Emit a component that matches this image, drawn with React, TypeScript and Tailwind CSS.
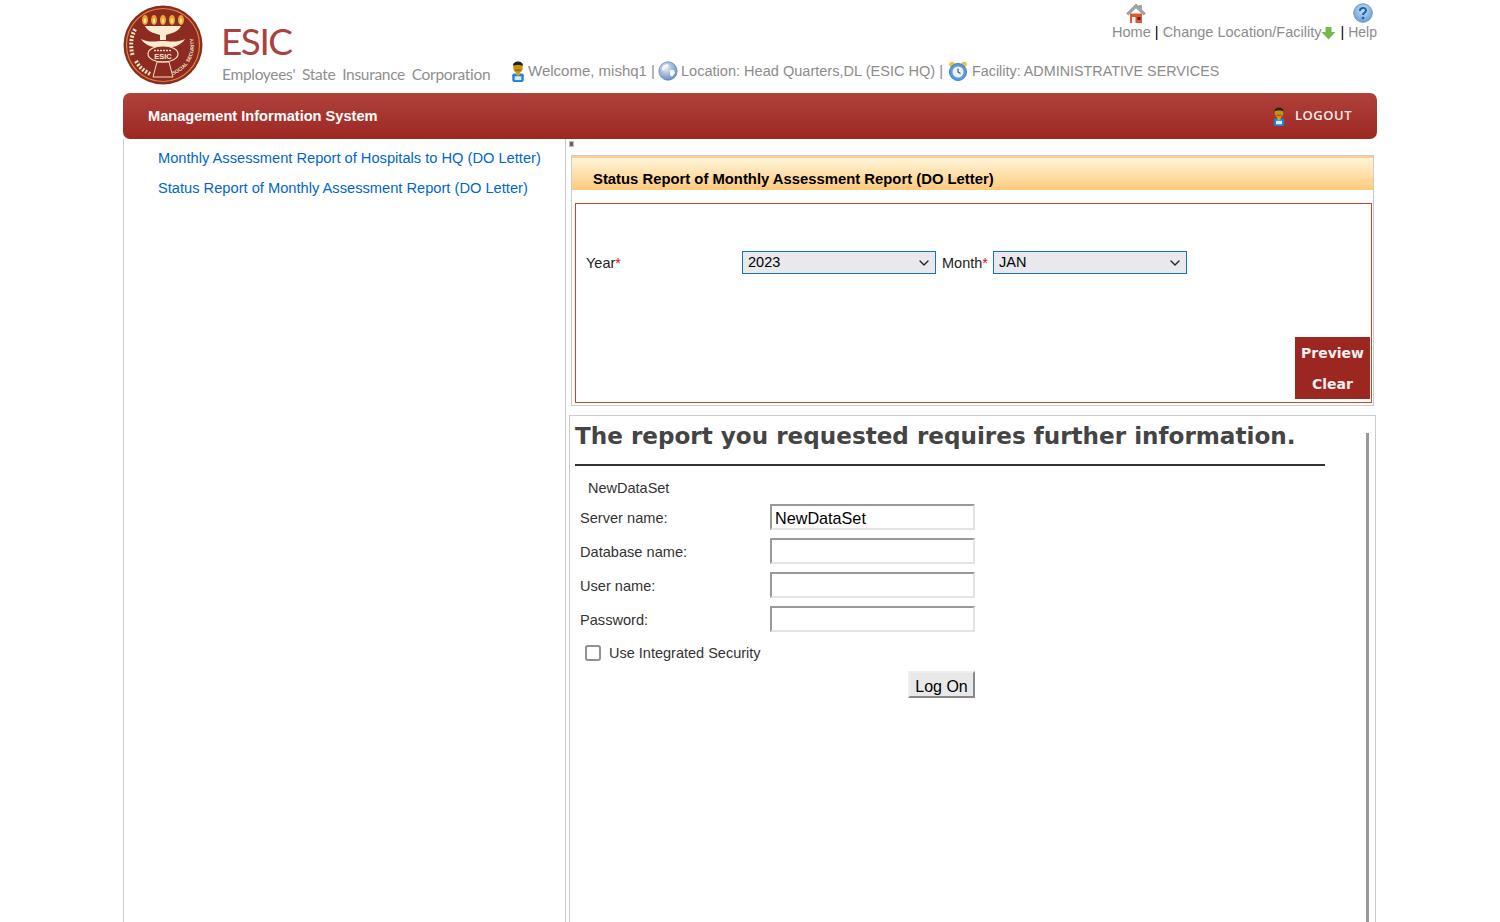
import { ChevronDown } from "lucide-react";

function PersonIcon({ className }: { className?: string }) {
  return (
    <svg viewBox="0 0 16 22" className={className}>
      <rect x="2" y="13" width="12" height="9" rx="2" fill="#1f7fe0" />
      <rect x="4.5" y="16" width="7" height="4" fill="#d8ecff" />
      <path d="M6 11h4v3l-2 2-2-2z" fill="#d8a020" />
      <ellipse cx="8" cy="7" rx="5" ry="5.5" fill="#c8920f" />
      <path d="M2.5 5C3 1.500 5.500 .5 8 .5s5 1 5.500 4.500C11 3.800 5 3.800 2.500 5z" fill="#2a2018" />
      <path d="M5 9.500h6" stroke="#7a5508" strokeWidth="1" />
    </svg>
  );
}

function GlobeIcon() {
  return (
    <svg viewBox="0 0 20 20" className="w-[20px] h-[20px] shrink-0">
      <defs>
        <radialGradient id="globe" cx="40%" cy="35%" r="70%">
          <stop offset="0%" stopColor="#e6eef8" />
          <stop offset="100%" stopColor="#5f88bd" />
        </radialGradient>
      </defs>
      <circle cx="10" cy="10" r="9.200" fill="url(#globe)" stroke="#6c8fb8" strokeWidth="0.800" />
      <path d="M6 4c2-1 4-1 5 0l-1 2-3 1-1 3-2-1c-.5-2 .5-4 2-5zM12 9l4 0 1 3-3 4-2-2z" fill="#f4f7fb" />
    </svg>
  );
}

function ClockIcon() {
  return (
    <svg viewBox="0 0 20 20" className="w-[20px] h-[20px] shrink-0">
      <circle cx="4" cy="3.500" r="2.800" fill="#f0c23a" />
      <circle cx="16" cy="3.500" r="2.800" fill="#f0c23a" />
      <circle cx="10" cy="11" r="8.500" fill="#5b9bdc" stroke="#3f7fbf" strokeWidth="1" />
      <circle cx="10" cy="11" r="5.500" fill="#eaf3fb" />
      <path d="M10 7.500V11l2.500 1.500" stroke="#555" strokeWidth="1.200" fill="none" />
    </svg>
  );
}

function HomeIcon() {
  return (
    <svg viewBox="0 0 20 19" className="w-[20px] h-[19px] ml-[10px]">
      <path d="M4 9.500h12V19H4z" fill="#d9583a" />
      <path d="M10 0 .5 9.500 2.500 11 10 3.800 17.500 11l2-1.500L15.500 5.500V1.500h-2.500v1.500z" fill="#a3a3a3" stroke="#7d7d7d" strokeWidth="0.500" />
      <rect x="6" y="13" width="3.500" height="6" fill="#f3efe8" />
      <rect x="11.500" y="13" width="3" height="3" fill="#6e1f10" />
    </svg>
  );
}

function HelpIcon() {
  return (
    <svg viewBox="0 0 20 20" className="w-[20px] h-[20px]">
      <defs>
        <radialGradient id="help" cx="50%" cy="35%" r="70%">
          <stop offset="0%" stopColor="#c4dcf4" />
          <stop offset="100%" stopColor="#5f9bd8" />
        </radialGradient>
      </defs>
      <circle cx="10" cy="10" r="9.300" fill="url(#help)" stroke="#7f96ad" strokeWidth="1" />
      <path d="M7 8c0-4 6-4 6-.5 0 2-3 2-3 4.500" stroke="#1f5f9f" strokeWidth="2" fill="none" />
      <circle cx="10" cy="15" r="1.300" fill="#1f5f9f" />
    </svg>
  );
}

function ArrowIcon() {
  return (
    <svg viewBox="0 0 15 14" className="w-[15px] h-[14px] shrink-0 mt-[1px]">
      <path d="M4.500 1h6v5h4l-7 7.500L.5 6h4z" fill="#78b84a" />
    </svg>
  );
}

function Logo() {
  return (
    <svg viewBox="0 0 80 80" className="w-[80px] h-[80px] shrink-0">
      <defs>
        <path id="rightArc" d="M50 70A32 32 0 0 0 70 32" />
      </defs>
      <circle cx="40" cy="40" r="39.500" fill="#8d2a22" />
      <circle cx="40" cy="40" r="36.500" fill="none" stroke="#d98a3a" strokeWidth="1.200" />
      {[22, 31, 40, 49, 58].map((x) => (
        <g key={x}>
          <ellipse cx={x} cy={15} rx="3" ry="5" fill="#f0a32a" />
          <ellipse cx={x} cy={16} rx="1.300" ry="2.400" fill="#fbe6a8" />
        </g>
      ))}
      <path d="M22 21H58C56 27 46 29 43 30V35H37V30C34 29 24 27 22 21z" fill="#f7ecd2" />
      <path d="M18 34C26 38 34 36 40 36C46 36 54 38 62 34C58 41 48 43 40 43C32 43 22 41 18 34z" fill="#f7ecd2" />
      <ellipse cx="40" cy="49" rx="15" ry="8" fill="#8d2a22" stroke="#f3e3c0" strokeWidth="1.200" />
      <path d="M31 45.500h18" stroke="#f3e3c0" strokeWidth="1.500" strokeDasharray="2 1" />
      <text x="40" y="53.500" textAnchor="middle" fontSize="7.500" fontWeight="700" fill="#f7ecd2" fontFamily="Liberation Sans">ESIC</text>
      <path d="M34 57h12l4 15H30z" fill="none" stroke="#f3e3c0" strokeWidth="1" />
      <text fontSize="5" fontWeight="700" fill="#f3e3c0" fontFamily="Liberation Sans">
        <textPath href="#rightArc">SOCIAL SECURITY</textPath>
      </text>
      <path d="M9.500 50C7 40 8 30 13 23M13 56c3 6 8 10 14 13" fill="none" stroke="#f3e3c0" strokeWidth="4" strokeDasharray="2 1.500" />
    </svg>
  );
}

function ParamRow({ label, value }: { label: string; value?: string }) {
  return (
    <div className="flex items-center h-[26px] mb-[8px]">
      <label className="w-[195px] pl-[5px] pt-[3px] text-[14.6px] text-[#333]">{label}</label>
      <input
        defaultValue={value}
        className="w-[205px] h-[26px] px-[3px] pt-[3px] text-[16.2px] text-black border-2 border-t-[#999] border-l-[#999] border-r-[#e4e4e4] border-b-[#e4e4e4] outline-none"
      />
    </div>
  );
}

function SelectBox({ value, options }: { value: string; options: string[] }) {
  return (
    <div className="relative w-[194px] h-[23px] shrink-0">
      <select
        defaultValue={value}
        className="appearance-none w-full h-full pl-[5px] text-[14.5px] text-black bg-[#e8e8ed] border border-[#0f75bc] outline-none"
      >
        {options.map((o) => (
          <option key={o}>{o}</option>
        ))}
      </select>
      <ChevronDown className="absolute right-[4px] top-[4px] w-[16px] h-[16px] text-[#222] pointer-events-none" strokeWidth={2} />
    </div>
  );
}

export default function App() {
  return (
    <div className="h-[922px] overflow-hidden bg-white font-['Liberation_Sans',Arial,sans-serif]">
      <div className="w-[1254px] ml-[123px]">
        {/* Header */}
        <header className="flex h-[93px]">
          <div className="pt-[5px]">
            <Logo />
          </div>
          <div className="w-[288px] ml-[19px] pt-[19px] shrink-0 font-['Lato',sans-serif]">
            <div className="text-[37px] leading-[44px] text-[#a8423f] tracking-[-1.5px] -ml-[1px]">ESIC</div>
            <div className="text-[15.5px] leading-[20px] mt-[1px] text-[#8f8f8f] whitespace-nowrap tracking-[-0.3px] [word-spacing:3px]">
              Employees' State Insurance Corporation
            </div>
          </div>
          <div className="flex-1 flex flex-col text-[#8c8c8c]">
            <div className="flex justify-end items-end h-[41px] pt-[3px] text-[14.5px]">
              <a className="flex flex-col items-center leading-[18px] text-[14.6px]">
                <HomeIcon />
                Home
              </a>
              <span className="text-black mx-[4px] leading-[18px]">|</span>
              <a className="flex items-center leading-[18px]">
                Change Location/Facility
                <ArrowIcon />
              </a>
              <span className="text-black mx-[4px] leading-[18px]">|</span>
              <a className="flex flex-col items-center leading-[18px] text-[14px]">
                <HelpIcon />
                Help
              </a>
            </div>
            <div className="flex items-center mt-[19px] h-[22px] whitespace-nowrap">
              <PersonIcon className="w-[16px] h-[21px] shrink-0 mr-[2px]" />
              <span className="w-[130px] shrink-0 text-[15px]">Welcome, mishq1 |</span>
              <GlobeIcon />
              <span className="ml-[3px] w-[267px] shrink-0 pt-[2px] text-[14.56px]">Location: Head Quarters,DL (ESIC HQ) |</span>
              <ClockIcon />
              <span className="ml-[4px] pt-[2px] text-[14.35px]">Facility: ADMINISTRATIVE SERVICES</span>
            </div>
          </div>
        </header>

        {/* Title bar */}
        <div className="flex items-center justify-between h-[46px] rounded-[7px] bg-gradient-to-b from-[#b0413b] to-[#9c2721] px-[25px]">
          <span className="pt-[2px] text-[14.6px] font-bold text-white">Management Information System</span>
          <a className="flex items-center gap-[9px] text-[13px] font-semibold font-['Open_Sans',sans-serif] text-[#eeeeee] tracking-[0.5px]">
            <PersonIcon className="w-[14px] h-[19px]" />
            <span className="pb-[1px]">LOGOUT</span>
          </a>
        </div>

        <div className="flex h-[783px]">
          {/* Left menu */}
          <nav className="w-[443px] shrink-0 border-l border-r border-[#cccccc] pt-[4px] pl-[34px] text-[14.67px] text-[#0066cc]">
            <a className="block h-[30px] leading-[30px]">Monthly Assessment Report of Hospitals to HQ (DO Letter)</a>
            <a className="block h-[30px] leading-[30px]">Status Report of Monthly Assessment Report (DO Letter)</a>
          </nav>

          <main className="flex-1 pl-[3px]">
            <div className="w-[5px] h-[6px] mt-[2px] bg-[#666] border border-[#bbb]" />

            {/* Filter panel */}
            <section className="ml-[2px] mt-[8px] w-[803px] h-[251px] border border-[#cccccc] flex flex-col">
              <h2 className="h-[34px] shrink-0 pl-[21px] pt-[12px] leading-[18px] border-t-2 border-[#ffcf8f] bg-gradient-to-b from-[#fff6d8] to-[#ffc97c] text-[14.83px] font-bold text-black">
                Status Report of Monthly Assessment Report (DO Letter)
              </h2>
              <div className="mt-[13px] ml-[3px] w-[797px] h-[200px] border border-[#c8491c] flex flex-col">
                <div className="flex items-center h-[23px] mt-[47px] text-[14.5px] text-[#222]">
                  <span className="w-[166px] shrink-0 pl-[10px] pt-[2px]">
                    Year<span className="text-red-600">*</span>
                  </span>
                  <SelectBox value="2023" options={["2023", "2022"]} />
                  <span className="ml-[6px] w-[51px] shrink-0 pt-[2px]">
                    Month<span className="text-red-600">*</span>
                  </span>
                  <SelectBox value="JAN" options={["JAN", "FEB"]} />
                </div>
                <div className="mt-auto mb-[3px] mr-[1px] self-end w-[75px] h-[62px] bg-[#9c2721] flex flex-col items-center text-[14px] font-bold font-['DejaVu_Sans',sans-serif] text-[#f5f0ee]">
                  <button className="h-[31px] w-full pt-[2px]">Preview</button>
                  <button className="h-[31px] w-full pt-[2px]">Clear</button>
                </div>
              </div>
            </section>

            {/* Report viewer */}
            <section className="relative mt-[9px] w-[807px] h-[520px] border border-[#cccccc] pl-[5px]">
              <div className="absolute right-[6px] top-[17px] bottom-0 w-[3px] bg-[#999999]" />
              <h1 className="w-[750px] h-[50px] border-b-2 border-[#333333] pt-[4px] text-[23.1px] leading-[32px] font-bold font-['DejaVu_Sans',sans-serif] text-[#444444] whitespace-nowrap">
                The report you requested requires further information.
              </h1>
              <div className="pl-[13px] mt-[13px] h-[18px] leading-[18px] text-[14.5px] text-[#333]">NewDataSet</div>
              <div className="mt-[7px] w-[400px]">
                <ParamRow label="Server name:" value="NewDataSet" />
                <ParamRow label="Database name:" />
                <ParamRow label="User name:" />
                <ParamRow label="Password:" />
              </div>
              <label className="flex items-center mt-[12px] h-[18px] pl-[10px] text-[14.5px] text-[#333]">
                <span className="w-[16px] h-[16px] mr-[8px] mb-[1px] rounded-[3px] border-2 border-[#8f8f9d] bg-white" />
                <span className="pt-[2px]">Use Integrated Security</span>
              </label>
              <div className="w-[400px] flex justify-end mt-[9px]">
                <button className="w-[67px] h-[27px] pt-[3px] text-[16px] leading-[22px] text-black bg-[#e8e8e8] border-2 border-t-[#eeeeee] border-l-[#eeeeee] border-r-[#888888] border-b-[#888888]">
                  Log On
                </button>
              </div>
            </section>
          </main>
        </div>
      </div>
    </div>
  );
}
